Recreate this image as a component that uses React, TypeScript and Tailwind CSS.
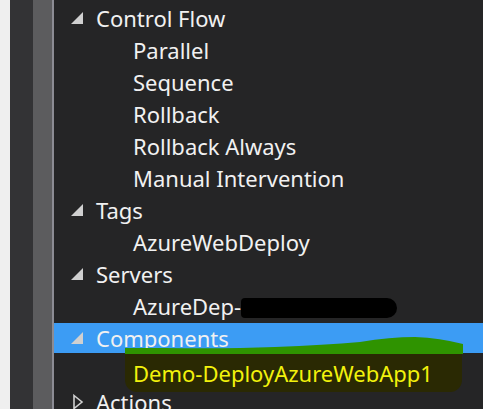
import React from 'react';

type Row = {
  label: string;
  depth: 0 | 1;
  toggle?: 'open' | 'closed';
  selected?: boolean;
  kind?: 'redacted' | 'marked';
};

const rows: Row[] = [
  { label: 'Control Flow', depth: 0, toggle: 'open' },
  { label: 'Parallel', depth: 1 },
  { label: 'Sequence', depth: 1 },
  { label: 'Rollback', depth: 1 },
  { label: 'Rollback Always', depth: 1 },
  { label: 'Manual Intervention', depth: 1 },
  { label: 'Tags', depth: 0, toggle: 'open' },
  { label: 'AzureWebDeploy', depth: 1 },
  { label: 'Servers', depth: 0, toggle: 'open' },
  { label: 'AzureDep-', depth: 1, kind: 'redacted' },
  { label: 'Components', depth: 0, toggle: 'open', selected: true },
  { label: 'Demo-DeployAzureWebApp1', depth: 1, kind: 'marked' },
  { label: 'Actions', depth: 0, toggle: 'closed' },
];

function Toggle({ state }: { state: 'open' | 'closed' }) {
  if (state === 'open') {
    return (
      <svg width="14" height="14" viewBox="0 0 14 14" className="shrink-0">
        <path d="M13 1 L13 13 L1 13 Z" fill="#d0d0d0" />
      </svg>
    );
  }
  return (
    <svg width="14" height="16" viewBox="0 0 14 16" className="shrink-0">
      <path d="M4 1.5 L12 8 L4 14.5 Z" fill="none" stroke="#d0d0d0" strokeWidth="1.6" />
    </svg>
  );
}

const label = 'text-[22px] leading-none whitespace-nowrap';

function TreeRow({ row }: { row: Row }) {
  if (row.kind === 'marked') {
    return (
      <div className="h-[32px] shrink-0 flex items-start">
        <div className="w-[71px] shrink-0" />
        <div className="relative w-[337px] h-[39px] -mt-[2px] bg-[#2a2903] rounded-b-[12px] pl-[8px] flex items-center">
          <svg
            width="338"
            height="18"
            viewBox="0 0 338 18"
            className="absolute left-0 -top-[17px]"
          >
            <path
              d="M0 12 L40 12 Q100 13 150 11 Q200 9 235 6 Q265 1 290 1 Q315 2 338 8 L338 18 L0 18 Z"
              fill="#2f9300"
            />
          </svg>
          <span className={`${label} text-[#f2f20c] relative`}>{row.label}</span>
        </div>
      </div>
    );
  }

  return (
    <div className="h-[32px] shrink-0 flex items-start">
      <div
        className={`h-[30px] w-full flex items-center ${row.selected ? 'bg-[#3c9cf4]' : ''}`}
      >
        {row.depth === 0 ? (
          <div className="w-[42px] pl-[16px] shrink-0 flex items-center">
            {row.toggle && <Toggle state={row.toggle} />}
          </div>
        ) : (
          <div className="w-[79px] shrink-0" />
        )}
        <span className={`${label} text-[#f1f1f1] flex items-center`}>
          {row.label}
          {row.kind === 'redacted' && (
            <span className="inline-block w-[156px] h-[20px] bg-black rounded-r-[10px] rounded-l-[4px] mt-[4px]" />
          )}
        </span>
      </div>
    </div>
  );
}

export default function App() {
  return (
    <div
      className="w-[483px] h-[409px] overflow-hidden flex bg-[#252526]"
      style={{ fontFamily: '"Noto Sans", "Open Sans", sans-serif' }}
    >
      <div className="w-[10px] bg-[#efefef] shrink-0" />
      <div className="w-[23px] bg-[#333335] shrink-0" />
      <div className="w-[19px] bg-[#5c5c5e] shrink-0" />
      <div className="w-[2px] bg-[#8c8c94] shrink-0" />
      <div className="flex-1 pt-[3px] flex flex-col">
        {rows.map((r) => (
          <TreeRow key={r.label} row={r} />
        ))}
      </div>
    </div>
  );
}
